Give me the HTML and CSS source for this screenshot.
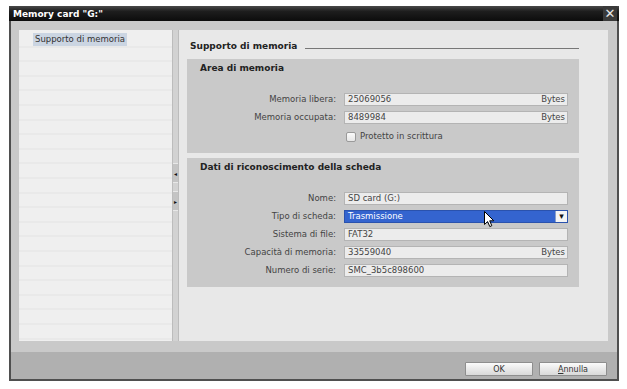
FILE: index.html
```html
<!DOCTYPE html>
<html lang="it">
<head>
  <meta charset="UTF-8">
  <meta name="viewport" content="width=device-width, initial-scale=1.0">
  <title>Memory card</title>
  <link rel="stylesheet" href="styles.css">
</head>
<body>
  <div class="dialog">
    <div class="titlebar">
      <span class="title">Memory card "G:"</span>
      <span class="close">✕</span>
    </div>

    <div class="main">
      <ul class="tree">
        <li class="selected">Supporto di memoria</li>
      </ul>

      <div class="splitter">
        <span class="handle">◂</span>
        <span class="handle">▸</span>
      </div>

      <div class="panel">
        <div class="section-head">
          <h2>Supporto di memoria</h2>
          <span class="rule"></span>
        </div>

        <div class="group">
          <h3>Area di memoria</h3>
          <div class="field">
            <label>Memoria libera:</label>
            <div class="input"><span>25069056</span><span class="unit">Bytes</span></div>
          </div>
          <div class="field">
            <label>Memoria occupata:</label>
            <div class="input"><span>8489984</span><span class="unit">Bytes</span></div>
          </div>
          <div class="field field-check">
            <span></span>
            <label class="check"><span class="box"></span>Protetto in scrittura</label>
          </div>
        </div>

        <div class="group">
          <h3>Dati di riconoscimento della scheda</h3>
          <div class="field">
            <label>Nome:</label>
            <div class="input"><span>SD card (G:)</span></div>
          </div>
          <div class="field">
            <label>Tipo di scheda:</label>
            <div class="input select"><span>Trasmissione</span><span class="arrow">▾</span></div>
          </div>
          <div class="field">
            <label>Sistema di file:</label>
            <div class="input"><span>FAT32</span></div>
          </div>
          <div class="field">
            <label>Capacità di memoria:</label>
            <div class="input"><span>33559040</span><span class="unit">Bytes</span></div>
          </div>
          <div class="field">
            <label>Numero di serie:</label>
            <div class="input"><span>SMC_3b5c898600</span></div>
          </div>
        </div>
      </div>
    </div>

    <div class="footer">
      <button type="button" class="btn">OK</button>
      <button type="button" class="btn"><u>A</u>nnulla</button>
    </div>
  </div>

  <!-- mouse pointer over the dropdown -->
  <svg class="cursor" width="12" height="17" viewBox="0 0 12 17">
    <path d="M0.5 0.5 L0.5 13.5 L3.6 10.6 L5.8 15.6 L7.8 14.7 L5.7 9.8 L9.8 9.8 Z" fill="#fff" stroke="#000" stroke-width="1"/>
  </svg>
</body>
</html>
```

FILE: styles.css
```css
body {
  margin: 0;
  background: #fff;
  font-family: "DejaVu Sans", sans-serif;
  font-size: 8.5px;
  color: #444;
}

.dialog {
  margin: 6px 0 0 9px;
  width: 610px;
  height: 375px;
  box-sizing: border-box;
  border: 2px solid #4f4f4f;
  border-top: none;
  display: flex;
  flex-direction: column;
  background: #c9c9c9;
}

.titlebar {
  height: 15px;
  margin: 0 -2px;
  display: flex;
  align-items: center;
  justify-content: space-between;
  background: linear-gradient(to bottom, #4a4a4a 0%, #1e1e1e 35%, #0c0c0c 100%);
}

.title {
  padding-left: 4px;
  color: #fff;
  font-weight: bold;
  font-size: 9px;
}

.close {
  width: 14px;
  height: 15px;
  margin-right: 2px;
  display: flex;
  align-items: center;
  justify-content: center;
  background: #3a3a3a;
  color: #e6e6e6;
  font-weight: bold;
  font-size: 13px;
}

.main {
  height: 311px;
  padding: 9px 9px 11px 8px;
  display: flex;
}

.tree {
  margin: 0;
  padding: 3px 0 0 14px;
  width: 153px;
  box-sizing: border-box;
  list-style: none;
  background-color: #efefef;
  background-image: repeating-linear-gradient(to bottom, transparent 0, transparent 13.6px, #e3e3e3 13.6px, #e3e3e3 14.6px);
  background-position: 0 2.5px;
}

.tree li {
  display: inline-block;
  padding: 1px 2px;
  line-height: 11px;
  color: #333;
}

.tree .selected {
  background: #cbd5e2;
}

.splitter {
  width: 7px;
  box-sizing: border-box;
  background: #d2d2d2;
  border-left: 1px solid #bcbcbc;
  border-right: 1px solid #bcbcbc;
  display: flex;
  flex-direction: column;
  align-items: center;
  padding-top: 133px;
  gap: 8px;
}

.handle {
  width: 5px;
  height: 18px;
  display: flex;
  align-items: center;
  justify-content: center;
  background: #c4c4c4;
  border-top: 1px solid #e8e8e8;
  border-bottom: 1px solid #e8e8e8;
  font-size: 6px;
  color: #111;
}

.panel {
  flex: 1;
  background: #e8e8e8;
  padding: 10px 29px 0 8px;
}

.section-head {
  display: flex;
  align-items: center;
  padding-left: 3px;
  height: 12px;
  margin-bottom: 7px;
}

.section-head h2 {
  margin: 0;
  font-size: 9px;
  font-weight: bold;
  color: #222;
  line-height: 12px;
}

.rule {
  flex: 1;
  margin: 4px 0 0 8px;
  border-top: 1px solid #777;
}

.group {
  background: #c9c9c9;
  padding: 3px 11px 10px 0;
  margin-bottom: 5px;
  display: flex;
  flex-direction: column;
  gap: 5px;
}

.group h3 {
  margin: 0 0 14px 13px;
  font-size: 9px;
  font-weight: bold;
  color: #222;
  line-height: 12px;
}

.field {
  display: grid;
  grid-template-columns: 149px 1fr;
  column-gap: 8px;
  align-items: center;
}

.field > label {
  text-align: right;
  line-height: 13px;
}

.input {
  height: 13px;
  box-sizing: border-box;
  border: 1px solid #b4b4b4;
  background: #ececec;
  display: flex;
  align-items: center;
  justify-content: space-between;
  padding: 0 2px 0 3px;
  color: #444;
  line-height: 11px;
}

.select {
  padding-right: 0;
  background: #3464cf;
  border-color: #2a52ad;
  color: #fff;
}

.arrow {
  width: 11px;
  height: 11px;
  display: flex;
  align-items: center;
  justify-content: center;
  background: #f4f4f4;
  border-left: 1px solid #8aa0c8;
  color: #111;
  font-size: 9px;
}

.field-check {
  margin-top: 1px;
}

.check {
  display: flex;
  align-items: center;
  gap: 4px;
  line-height: 11px;
}

.box {
  width: 10px;
  height: 10px;
  box-sizing: border-box;
  margin-left: 2px;
  border: 1px solid #9a9a9a;
  border-radius: 2px;
  background: linear-gradient(to bottom, #fafafa, #e6e6e6);
}

.footer {
  height: 27px;
  box-sizing: border-box;
  background: #b0b0b0;
  display: flex;
  justify-content: flex-end;
  align-items: flex-end;
  gap: 6px;
  padding: 0 10px 3px 0;
}

.btn {
  width: 68px;
  height: 14px;
  padding: 0;
  font-family: inherit;
  font-size: 8px;
  color: #333;
  border: 1px solid #8e8e8e;
  border-radius: 1px;
  background: linear-gradient(to bottom, #fbfbfb 0%, #e9e9e9 50%, #d9d9d9 100%);
}

.cursor {
  position: absolute;
  left: 484px;
  top: 211px;
}
```
